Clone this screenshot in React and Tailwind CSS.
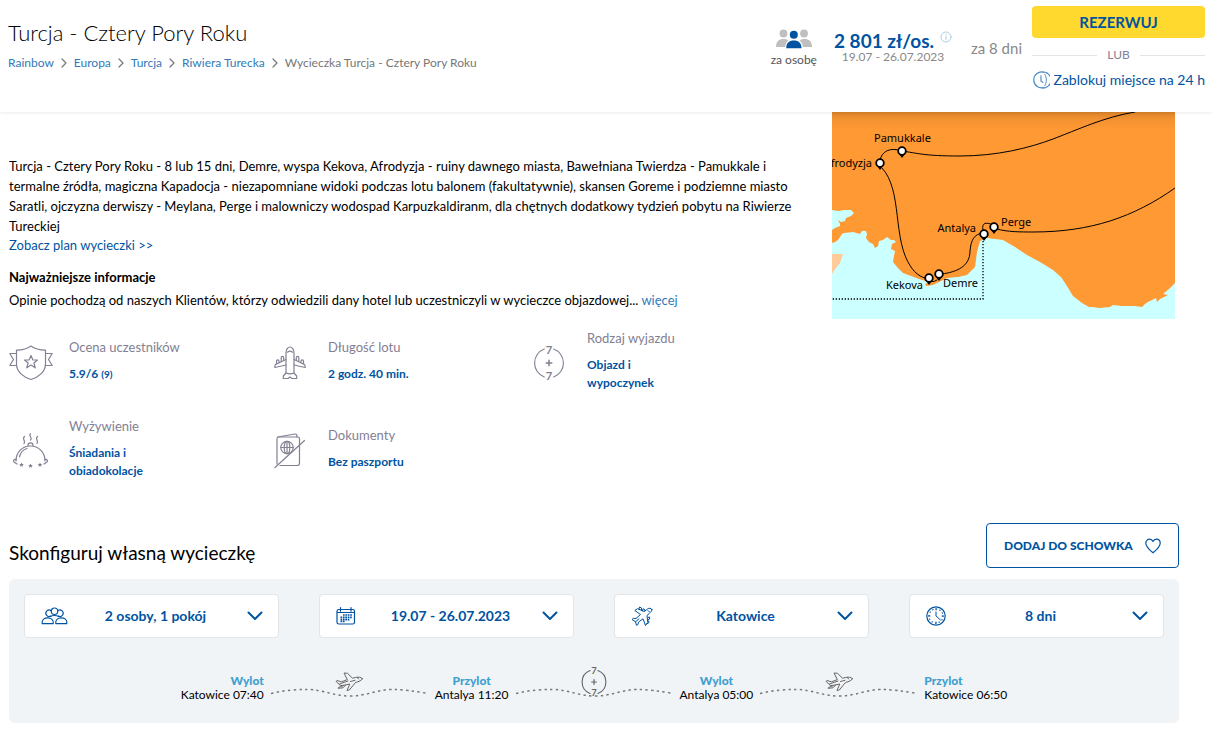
import React from "react";

const line = { fill: "none", stroke: "currentColor", strokeLinecap: "round", strokeLinejoin: "round" };

function PeopleSolid() {
  return (
    <svg width="36" height="20" viewBox="0 0 36 20" aria-hidden="true">
      <g fill="#bfbfbf">
        <circle cx="7.500" cy="4.500" r="3.900" />
        <circle cx="28" cy="4.500" r="3.900" />
        <path d="M0 18 C0 12.500 3 10 7.500 10 C10 10 11.500 10.700 12.500 11.600 C10.500 13 9.500 15 9.200 18 Z" />
        <path d="M36 18 C36 12.500 33 10 28.500 10 C26 10 24.500 10.700 23.500 11.600 C25.500 13 26.500 15 26.800 18 Z" />
      </g>
      <g fill="#0053a1">
        <circle cx="17.800" cy="5.800" r="4" />
        <path d="M10.200 19.300 C10.200 14 13 11.500 17.800 11.500 C22.600 11.500 25.500 14 25.500 19.300 Z" />
      </g>
    </svg>
  );
}

function InfoIcon() {
  return (
    <svg width="12" height="12" viewBox="0 0 12 12" {...line} strokeWidth="0.8" aria-hidden="true">
      <circle cx="6" cy="6" r="5" />
      <path d="M6 5.300V8.800M6 3.200V3.500" />
    </svg>
  );
}

function Clock24() {
  return (
    <svg width="18" height="18" viewBox="0 0 19 19" {...line} strokeWidth="1.200" aria-hidden="true">
      <path d="M12.500 1.300A8.400 8.400 0 1 0 12.500 17.500" />
      <path d="M11.500 1A8.400 8.400 0 0 1 11.500 18" strokeDasharray="2.500 1" />
      <path d="M13.500 3.500C15.800 7 15.800 12 13.500 15.500" strokeWidth="1" />
      <path d="M9.500 5V10.500L11.500 12" />
    </svg>
  );
}

function ShieldIcon() {
  return (
    <svg width="44" height="36" viewBox="0 0 44 36" {...line} strokeWidth="1.200" aria-hidden="true">
      <path d="M22 1C18 4 13 5 7.500 5.200V19C7.500 26.500 14 32 22 34.500C30 32 36.500 26.500 36.500 19V5.200C31 5 26 4 22 1Z" />
      <path d="M7.500 8.500H.8L4.500 14.500L.8 20.500H7.500M36.500 8.500H43.200L39.500 14.500L43.200 20.500H36.500" />
      <path d="M22 10.500L23.900 15H28.500L24.900 18L26.300 22.800L22 20L17.700 22.800L19.100 18L15.500 15H20.100Z" />
    </svg>
  );
}

function AirlinerIcon() {
  return (
    <svg width="32" height="34" viewBox="0 0 32 34" {...line} strokeWidth="1.200" aria-hidden="true">
      <path d="M12 27V7C12 3.500 14 1 16 1S20 3.500 20 7V27" />
      <path d="M13.500 6.200C15 5 17 5 18.500 6.200" />
      <path d="M12 13.500L1.500 18.500C.8 19 .8 20 .8 21.500L12 19M20 13.500L30.500 18.500C31.200 19 31.200 20 31.200 21.500L20 19" />
      <path d="M2.500 18V15C2.500 13.500 5 13.500 5 15V16.700M7.200 15.500V11.500C7.200 10 9.700 10 9.700 11.500V14.500M29.500 18V15C29.500 13.500 27 13.500 27 15V16.700M24.800 15.500V11.500C24.800 10 22.300 10 22.300 11.500V14.500" />
      <path d="M12 27C14.500 28 17.500 28 20 27L22.700 30V32.500H18L16 31L14 32.500H9.300V30Z" />
    </svg>
  );
}

function SevenPlusSeven({ size, weight }) {
  return (
    <svg width={size} height={size} viewBox="0 0 36 36" className="overflow-visible" {...line} strokeWidth={weight} aria-hidden="true">
      <path d="M13 3.200A15.800 15.800 0 0 0 13 32.800M23 3.200A15.800 15.800 0 0 1 23 32.800" />
      <path d="M15 18H21M18 15V21" strokeWidth="1.600" />
      <g fill="currentColor" stroke="none" fontSize="12" fontWeight="700" textAnchor="middle">
        <text x="18" y="8">7</text>
        <text x="18" y="36">7</text>
      </g>
    </svg>
  );
}

function DishIcon() {
  return (
    <svg width="38" height="36" viewBox="0 0 38 36" {...line} strokeWidth="1.200" aria-hidden="true">
      <path d="M4 28C4 19 10.500 13 18.500 13S33 19 33 28" />
      <path d="M7.500 24C8.500 19 11.500 16.500 15 15.500" />
      <path d="M4.500 26.500C1.500 26 1 28 2 29L5 31M32.500 26.500C35.500 26 36 28 35 29L32 31" />
      <path d="M16 12.500C16 9 21 9 21 12.500" />
      <path d="M12.500 3.500C9.500 6 14 7.500 12 10.500M18.500 .8C16 3 21 4.500 18.500 7M25.500 3.500C22.500 6 27 7.500 25 10.500" />
      <g fill="currentColor" stroke="none">
        <path d="M9.500 29.500L10.200 31L11.800 31.100L10.600 32.200L11 33.700L9.500 32.900L8 33.700L8.400 32.200L7.200 31.100L8.800 31Z" />
        <path d="M18.500 30.500L19.200 32L20.800 32.100L19.600 33.200L20 34.700L18.500 33.900L17 34.700L17.400 33.200L16.200 32.100L17.800 32Z" />
        <path d="M28 29.500L28.700 31L30.300 31.100L29.100 32.200L29.500 33.700L28 32.900L26.500 33.700L26.900 32.200L25.700 31.100L27.300 31Z" />
      </g>
    </svg>
  );
}

function PassportIcon() {
  return (
    <svg width="32" height="36" viewBox="0 0 32 36" {...line} strokeWidth="1.200" aria-hidden="true">
      <path d="M6 32.500H23Q25.500 32.500 25.500 30V5.500Q25.500 4 23.500 4H4.500Q3 4 3 6V31" />
      <path d="M3.500 4L21 1Q23 .8 23 4" />
      <circle cx="13" cy="14.500" r="6.200" />
      <ellipse cx="13" cy="14.500" rx="2.800" ry="6.200" />
      <path d="M6.800 14.500H19.200M13 8.300V20.700" />
      <path d="M1 34.500L30.500 7.500" />
    </svg>
  );
}

function PeopleOutline() {
  return (
    <svg width="27" height="18" viewBox="0 0 28 19" {...line} strokeWidth="1.200" aria-hidden="true">
      <circle cx="14" cy="4.500" r="3.400" />
      <path d="M10 9.500A3.400 3.400 0 1 1 10.500 4M18 9.500A3.400 3.400 0 1 0 17.500 4" />
      <path d="M1 17.500C.5 13 3.500 11.500 7 11.500S13.200 13.500 12.700 17.500ZM27 17.500C27.500 13 24.500 11.500 21 11.500S14.800 13.500 15.300 17.500Z" />
      <path d="M9.800 10C11.500 8.600 16.500 8.600 18.200 10" />
    </svg>
  );
}

function CalendarIcon() {
  return (
    <svg width="20" height="18" viewBox="0 0 20 18" {...line} strokeWidth="1.200" aria-hidden="true">
      <rect x="1" y="2.500" width="17.500" height="14.500" rx="1.800" />
      <path d="M4.500 .6V4.200M15 .6V4.200M1.500 5.500H18" />
      <path d="M7 8H16M4.500 10.300H16M4.500 12.600H13.500M4.500 14.500H9" strokeWidth="1.700" strokeLinecap="butt" strokeDasharray="1.700 0.700" />
    </svg>
  );
}

function TiltedPlane() {
  return (
    <svg width="22" height="21" viewBox="0 0 22 21" {...line} aria-hidden="true">
      <path d="M20.800 3.300C21.500 4.500 20 6 18.500 7.200L16 9.500L16.800 16.500L14.500 19.500L12 12.800L7.500 16L7 18.500L5.500 19.300L4.500 15.800L1 13.500L2.300 12.300L5 12.500L9.500 8.500L3.800 4.500L6.500 2.700L13.300 5.500L16.500 3C18.200 1.800 20 2 20.800 3.300Z" />
      <path d="M8 3.300L8.500 1L10.500 2V4.300M11.500 4.800L12 2.800L13.800 3.500V5M17 11.500L18.600 11V13L16.800 13.800M17 15L18 15.200L17.800 16.800L15.500 18" />
      <path d="M4.500 15.800L8 12.800M17 4.500L18.500 6" />
    </svg>
  );
}

function DialIcon() {
  return (
    <svg width="20" height="20" viewBox="0 0 20 20" {...line} aria-hidden="true">
      <circle cx="10" cy="10" r="9.200" strokeWidth="1.200" />
      <circle cx="10" cy="10" r="7" strokeWidth="1.100" strokeDasharray="0.500 3.165" />
      <path d="M10 2.500V4M10 16V17.500M2.500 10H4M16 10H17.500M10 6V10L14.500 14" />
    </svg>
  );
}

function RoutePlane() {
  return (
    <svg width="28" height="20" viewBox="0 0 28 20" {...line} aria-hidden="true">
      <path d="M27.300 6.700C26 5 23.500 4.800 20.500 5.500L17.500 6.200L12.500 1.300L9 1L12.300 7.600L6.500 9.800L1.800 8.500L1 9.300L4.300 12.500C5 13.600 6.500 13.700 8.500 13.300L14.800 12L12 18.500L14.300 18L20.500 10.500C24 9.500 27 8.500 27.300 6.700Z" />
      <path d="M4.500 12L13 9M8.500 13.500L3.500 15.500L3 16.300L8 15.800L10.500 13.200M15.500 9.500L20 8.300M22.500 5.500L23.500 7" />
    </svg>
  );
}

function Chevron() {
  return (
    <svg width="16" height="10" viewBox="0 0 16 10" {...line} strokeWidth="2" aria-hidden="true">
      <path d="M1.500 1.500L8 8L14.500 1.500" />
    </svg>
  );
}

function HeartIcon() {
  return (
    <svg width="16" height="16" viewBox="0 0 16 16" {...line} strokeWidth="1.200" aria-hidden="true">
      <path d="M8 14.800C4 11.500 .8 8.500 .8 5.200C.8 2.800 2.500 1.200 4.500 1.200C6 1.200 7.400 2 8 3.400C8.600 2 10 1.200 11.500 1.200C13.500 1.200 15.200 2.800 15.200 5.200C15.200 8.500 12 11.500 8 14.800Z" />
    </svg>
  );
}

const pins = [
  [70, 39], [48, 51], [97, 166], [107, 162], [162, 115], [152, 122],
];

const places = [
  ["Pamukkale", 42, 30, "start"],
  ["Afrodyzja", 40, 55, "end"],
  ["Antalya", 144, 120, "end"],
  ["Perge", 169, 114, "start"],
  ["Kekova", 91, 177, "end"],
  ["Demre", 111, 175, "start"],
];

function RouteMap() {
  return (
    <svg viewBox="0 0 343 207" className="block w-full" role="img" aria-label="Mapa trasy wycieczki">
      <defs>
        <linearGradient id="top" x1="0" y1="0" x2="0" y2="1">
          <stop offset="0" stopColor="#000" stopOpacity="0.140" />
          <stop offset="0.400" stopColor="#000" stopOpacity="0.050" />
          <stop offset="1" stopColor="#000" stopOpacity="0" />
        </linearGradient>
      </defs>
      <rect width="343" height="207" fill="#ff9933" />
      <g fill="#ccffff">
        <path d="M0 98L6 99L12 98L19 98L22 101L19 104L14 106L13 109L9 110L6 108L8 112L8 114L3 116L0 118Z" />
        <path d="M0 131L3 130L6 128L10 122L12 121L21 120L28 122L30 119L34 119L35 122L34 126L37 130L41 132L43 136L46 134L47 129L51 128L55 125L59 128L62 128L64 130L60 132L59 137L63 139L62 144L61 150L66 156L71 161L79 164L90 168L98 170L93 172L94 174L101 173L107 170L115 166L126 165L135 163L140 158L143 155L145 140L148 129L155 126L171 128L183 135L195 143L208 150L221 158L229 165L235 174L241 184L250 191L257 195L261 195L267 196L278 195L281 193L290 194L303 194L310 195L313 192L316 190L324 186L325 190L328 187L336 183L331 182L337 177L343 171V207H0Z" />
      </g>
      <path d="M0 142H11L8 151L4 156L0 162Z" fill="#ffcc99" />
      <g {...line} stroke="#000">
        <path d="M303 0C272 5 245 18 221 27S165 44 128 44S85 41 70 39C58 35 50 39 48 48" />
        <path d="M50 56C71 78 60 128 79 155C83 161 88 165 96 167Q99 172 105 168" />
        <path d="M110 162C124 160 138 155 138 139C139 128 142 122 151 121" />
        <path d="M151 118C149 110 155 110 161 113M165 117C175 120 189 120 201 120C259 120 302 105 343 76" />
      </g>
      <path d="M151 129V187H0" fill="none" stroke="#000" strokeWidth="1.300" strokeDasharray="1.300 1.700" />
      {pins.map(([x, y]) => (
        <g key={x + "-" + y}>
          <path d={`M${x - 4.500} ${y + 1}L${x} ${y + 7}L${x + 4.500} ${y + 1}Z`} />
          <circle cx={x} cy={y} r="3.800" fill="#fff" stroke="#000" strokeWidth="1.800" />
        </g>
      ))}
      <g fontSize="11" fontFamily="'Noto Sans', sans-serif" fill="#000">
        {places.map(([name, x, y, anchor]) => (
          <text key={name} x={x} y={y} textAnchor={anchor}>{name}</text>
        ))}
      </g>
      <rect width="343" height="18" fill="url(#top)" />
    </svg>
  );
}

const crumbs = ["Rainbow", "Europa", "Turcja", "Riwiera Turecka"];

function Header() {
  return (
    <header className="relative flex min-h-28 items-start justify-between bg-white pr-[7px] pl-2 shadow-[0_1px_3px_rgba(0,0,0,0.08)]">
      <div className="pt-[18px]">
        <h1 className="text-[22px] leading-[30px] font-light text-black">Turcja - Cztery Pory Roku</h1>
        <nav aria-label="Okruszki" className="mt-[5px] flex items-center text-xs leading-5 text-[#777]">
          {crumbs.map((c) => (
            <React.Fragment key={c}>
              <a href="#" className="text-[#337ab7]">{c}</a>
              <svg width="6" height="10" viewBox="0 0 6 10" className="mx-[7px]" {...line} strokeWidth="1.200" aria-hidden="true">
                <path d="M1 1L5 5L1 9" />
              </svg>
            </React.Fragment>
          ))}
          <span>Wycieczka Turcja - Cztery Pory Roku</span>
        </nav>
      </div>
      <div className="flex items-start">
        <div className="flex flex-col items-center pt-[29px]">
          <PeopleSolid />
          <span className="mt-0.5 text-xs leading-[18px] text-[#555]">za osobę</span>
        </div>
        <div className="ml-[17px] pt-[31px]">
          <div className="flex items-start text-[#0053a1]">
            <span className="text-[19px] leading-5 font-bold">2 801 zł/os.</span>
            <button aria-label="Informacje o cenie" className="ml-1.5 text-[#9cc3d5]"><InfoIcon /></button>
          </div>
          <p className="text-center text-xs leading-3 text-[#888]">19.07 - 26.07.2023</p>
        </div>
        <p className="ml-[19px] pt-[38px] text-[15px] leading-5 text-[#888]">za 8 dni</p>
        <div className="ml-2.5 w-[173px] pt-1.5">
          <button className="h-8 w-full rounded bg-[#ffd92e] text-[15px] font-bold text-[#0053a1]">REZERWUJ</button>
          <div className="mt-2 flex items-center gap-2.5 text-xs leading-[18px] text-[#838093]">
            <span className="h-px flex-1 bg-[#e5e5e8]" />
            LUB
            <span className="h-px flex-1 bg-[#e5e5e8]" />
          </div>
          <a href="#" className="mt-1.5 flex items-center justify-between text-sm leading-5 whitespace-nowrap text-[#0053a1]">
            <span className="text-[#4a88c6]"><Clock24 /></span>
            Zablokuj miejsce na 24 h
          </a>
        </div>
      </div>
    </header>
  );
}

const features = [
  { icon: <ShieldIcon />, title: "Ocena uczestników", value: <>5.9/6 <span className="text-[10px]">(9)</span></> },
  { icon: <AirlinerIcon />, title: "Długość lotu", value: "2 godz. 40 min." },
  { icon: <SevenPlusSeven size={34} weight="1.200" />, title: "Rodzaj wyjazdu", value: "Objazd i wypoczynek" },
  { icon: <DishIcon />, title: "Wyżywienie", value: "Śniadania i obiadokolacje" },
  { icon: <PassportIcon />, title: "Dokumenty", value: "Bez paszportu" },
];

function Feature({ icon, title, value }) {
  return (
    <li className="flex items-center gap-4">
      <span className="flex w-11 shrink-0 justify-center pt-1 text-[#838093]">{icon}</span>
      <div>
        <p className="text-[13px] leading-[18px] text-[#838093]">{title}</p>
        <p className="mt-[9px] max-w-22 text-xs leading-[18px] font-bold text-[#0053a1]">{value}</p>
      </div>
    </li>
  );
}

const options = [
  { id: "guests", label: "Uczestnicy", value: "2 osoby, 1 pokój", icon: <PeopleOutline /> },
  { id: "dates", label: "Termin", value: "19.07 - 26.07.2023", icon: <CalendarIcon /> },
  { id: "airport", label: "Miejsce wylotu", value: "Katowice", icon: <TiltedPlane /> },
  { id: "length", label: "Długość pobytu", value: "8 dni", icon: <DialIcon /> },
];

function Option({ id, label, value, icon }) {
  return (
    <div className="grid h-11 items-center rounded border border-[#e2e5e7] bg-white text-[#0053a1]">
      <select
        id={id}
        aria-label={label}
        className="col-start-1 row-start-1 h-full w-full appearance-none rounded bg-transparent pr-12 pl-14 text-center text-sm font-bold [text-align-last:center]"
      >
        <option>{value}</option>
      </select>
      <span className="pointer-events-none col-start-1 row-start-1 flex items-center justify-between pr-[15px] pl-4">
        <span className="flex min-w-5">{icon}</span>
        <Chevron />
      </span>
    </div>
  );
}

function Stop({ kind, place, align }) {
  return (
    <div className={align}>
      <p className="text-xs leading-[14px] font-black text-[#3fa0cf]">{kind}</p>
      <p className="text-xs leading-[14px] text-black">{place}</p>
    </div>
  );
}

function Leg({ children }) {
  return (
    <div className="flex w-[157px] flex-col items-center pb-1 text-[#666]">
      <span className="-mb-[11px] flex h-[30px] items-center">{children}</span>
      <svg viewBox="0 0 157 12" className="w-full" fill="none" stroke="#777" strokeWidth="1.500" strokeDasharray="2.400 3.300" aria-hidden="true">
        <path d="M0 7.500C14 4 26 3.500 36 3.500C52 3.500 62 10 79 10S106 3.500 121 3.500C131 3.500 143 5 157 7.500" />
      </svg>
    </div>
  );
}

export default function App() {
  return (
    <div className="bg-white font-[Lato,sans-serif] text-black">
      <Header />
      <main className="ml-[9px] max-w-[1170px]">
        <div className="flex items-start">
          <div className="flex-1 pt-11 pr-8">
            <p className="text-[13px] leading-5">
              Turcja - Cztery Pory Roku - 8 lub 15 dni, Demre, wyspa Kekova, Afrodyzja - ruiny dawnego miasta, Bawełniana Twierdza - Pamukkale i termalne źródła, magiczna Kapadocja - niezapomniane widoki podczas lotu balonem (fakultatywnie), skansen Goreme i podziemne miasto Saratli, ojczyzna derwiszy - Meylana, Perge i malowniczy wodospad Karpuzkaldiranm, dla chętnych dodatkowy tydzień pobytu na Riwierze Tureckiej
            </p>
            <a href="#" className="block text-[13px] leading-[18px] text-[#0053a1]">Zobacz plan wycieczki &gt;&gt;</a>
            <h2 className="mt-[13px] text-[13px] leading-5 font-bold">Najważniejsze informacje</h2>
            <p className="mt-[3px] text-[13px] leading-5">
              Opinie pochodzą od naszych Klientów, którzy odwiedzili dany hotel lub uczestniczyli w wycieczce objazdowej... <a href="#" className="text-[#337ab7]">więcej</a>
            </p>
            <ul className="mt-[19px] grid max-w-[777px] grid-cols-3 gap-y-[25px]">
              {features.map((f) => <Feature key={f.title} {...f} />)}
            </ul>
          </div>
          <div className="mr-1 w-[343px] shrink-0"><RouteMap /></div>
        </div>
        <div className="mt-[43px] flex items-start justify-between">
          <h2 className="pt-[18px] text-[19px] leading-6">Skonfiguruj własną wycieczkę</h2>
          <button className="flex h-[45px] w-[193px] items-center justify-between rounded border border-[#0053a1] px-[17px] text-xs font-black text-[#0053a1]">
            DODAJ DO SCHOWKA
            <HeartIcon />
          </button>
        </div>
        <section className="mt-[11px] rounded-md bg-[#f0f4f7] px-[15px] pt-[15px] pb-[21px]">
          <div className="grid grid-cols-4 gap-10">
            {options.map((o) => <Option key={o.id} {...o} />)}
          </div>
          <div className="mt-[29px] flex items-end justify-center gap-[7px]">
            <Stop kind="Wylot" place="Katowice 07:40" align="text-right" />
            <Leg><RoutePlane /></Leg>
            <Stop kind="Przylot" place="Antalya 11:20" align="text-center" />
            <Leg><SevenPlusSeven size={28} weight="1.400" /></Leg>
            <Stop kind="Wylot" place="Antalya 05:00" align="text-center" />
            <Leg><RoutePlane /></Leg>
            <Stop kind="Przylot" place="Katowice 06:50" align="text-left" />
          </div>
        </section>
      </main>
    </div>
  );
}
